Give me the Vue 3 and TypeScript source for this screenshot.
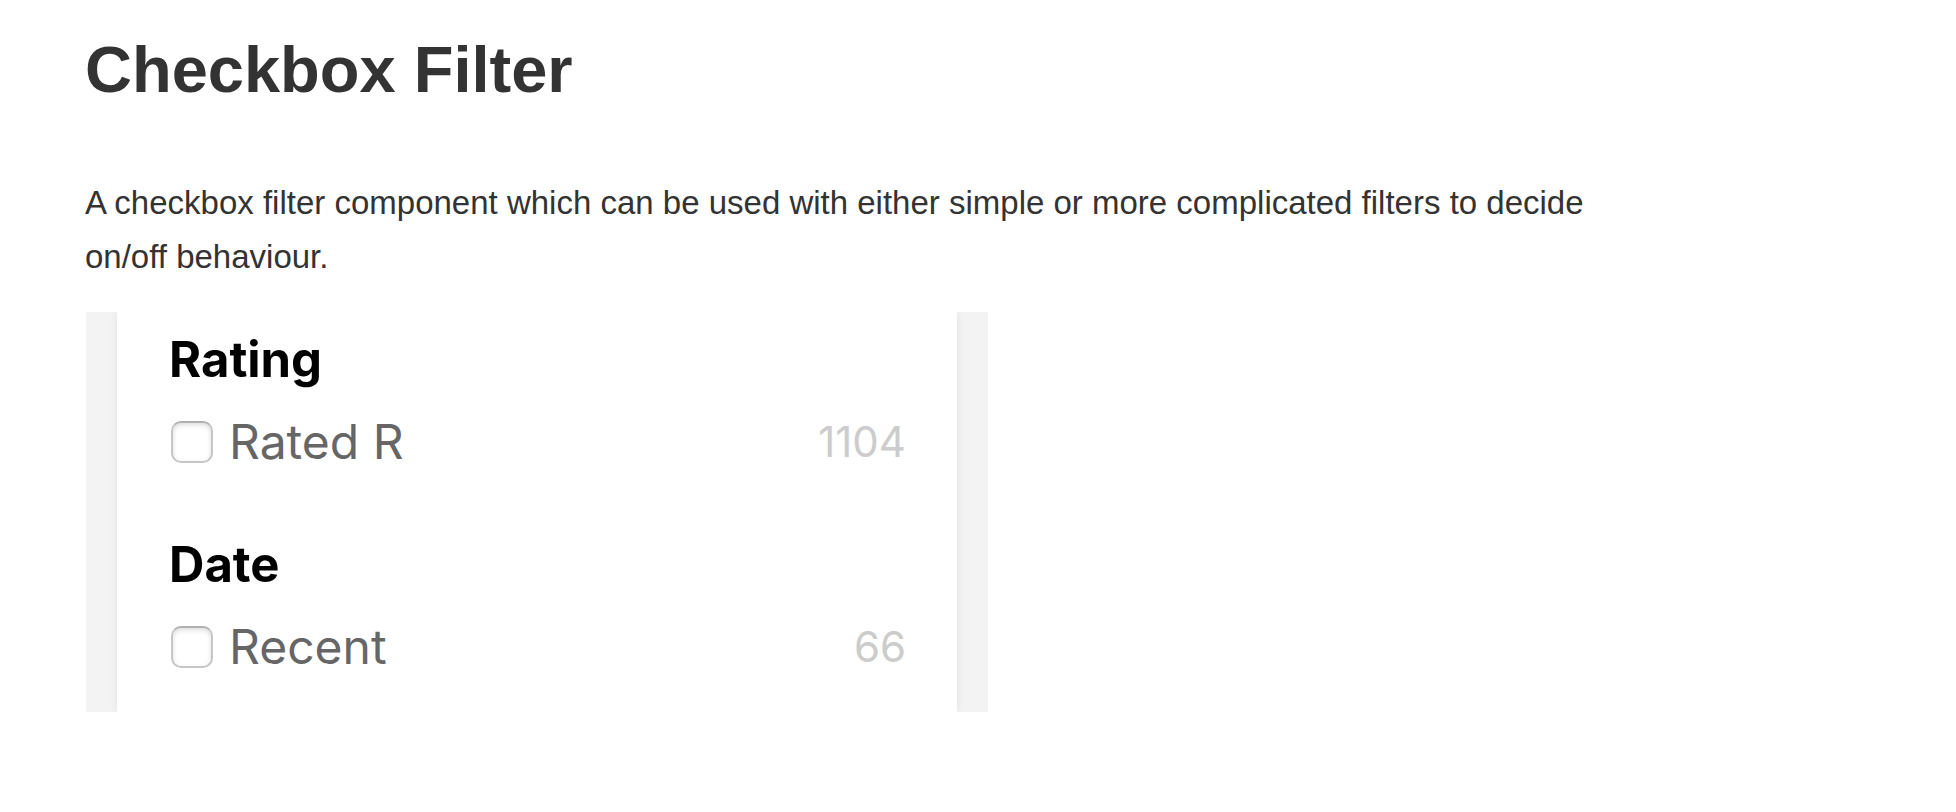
<script setup lang="ts">
import { ref } from 'vue'

interface CheckboxFilter {
  id: string
  title: string
  label: string
  count: number
  checked: boolean
}

const filters = ref<CheckboxFilter[]>([
  { id: 'rating', title: 'Rating', label: 'Rated R', count: 1104, checked: false },
  { id: 'date', title: 'Date', label: 'Recent', count: 66, checked: false },
])
</script>

<template>
  <main class="page">
    <h1 class="heading">Checkbox Filter</h1>
    <p class="intro">
      A checkbox filter component which can be used with either simple or more complicated filters to decide on/off behaviour.
    </p>
    <div class="frame">
      <div class="panel">
        <section v-for="filter in filters" :key="filter.id" class="group">
          <h2 class="title">{{ filter.title }}</h2>
          <div class="row">
            <input :id="filter.id" v-model="filter.checked" class="box" type="checkbox" />
            <label class="label" :for="filter.id">{{ filter.label }}</label>
            <span class="count">{{ filter.count }}</span>
          </div>
        </section>
      </div>
    </div>
  </main>
</template>

<style>
body {
  margin: 0;
  background: #fff;
}
</style>

<style scoped>
.page {
  max-width: 1560px;
  padding: 32px 85px 100px;
  font-family: "Liberation Sans", Arial, sans-serif;
  color: #333;
}

.heading {
  margin: 0 0 68px;
  font-size: 65px;
  line-height: 76px;
  font-weight: 700;
}

.intro {
  margin: 0;
  font-size: 33px;
  line-height: 54px;
}

.frame {
  box-sizing: border-box;
  max-width: 902px;
  margin: 28px 1px 0;
  padding: 0 31px;
  overflow: hidden;
  background: #f3f3f3;
}

.panel {
  display: flex;
  flex-direction: column;
  gap: 63px;
  padding: 18px 51px 35px 52px;
  background: #fff;
  box-shadow: 0 0 8px rgba(0, 0, 0, 0.08);
  font-family: Inter, "Liberation Sans", sans-serif;
}

.group {
  display: flex;
  flex-direction: column;
  gap: 22px;
}

.title {
  margin: 0;
  font-size: 49px;
  line-height: 60px;
  font-weight: 700;
  color: #000;
}

.row {
  display: flex;
  align-items: center;
  line-height: 60px;
}

.box {
  appearance: none;
  flex: none;
  width: 42px;
  height: 42px;
  margin: 0 16px 0 2px;
  border: 2px solid #c6c6c6;
  border-top-color: #b0b0b0;
  border-radius: 10px;
  background: #fff;
  box-shadow: inset 0 2px 5px rgba(0, 0, 0, 0.14);
}

.box:checked {
  background: #4a90e2;
}

.label {
  flex: 1;
  font-size: 48px;
  color: #666;
}

.count {
  font-size: 42px;
  color: #ccc;
}
</style>
